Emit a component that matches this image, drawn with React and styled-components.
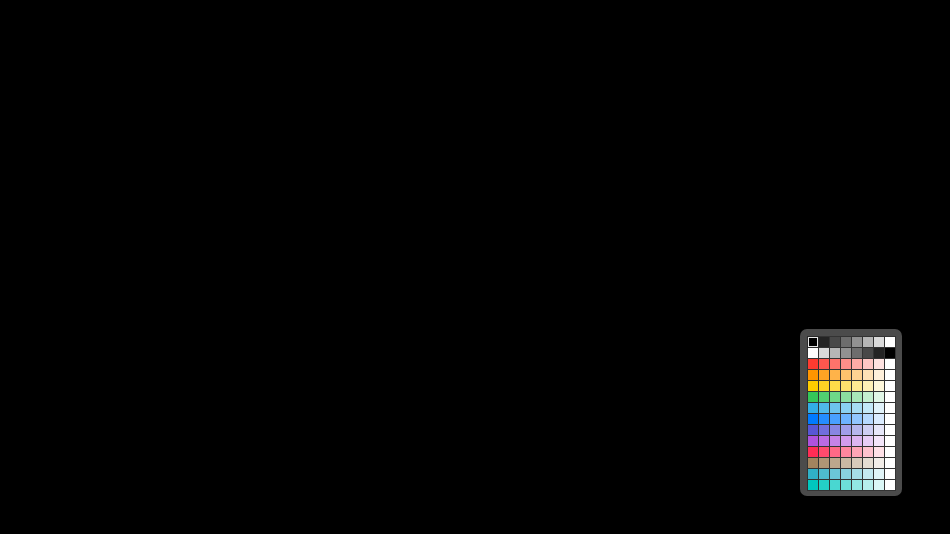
import React from "react"
import styled, {createGlobalStyle} from "styled-components"

const GlobalStyle = createGlobalStyle`
    html, body {
        margin: 0;
        padding: 0;
        background: #000;
        font-family: "Liberation Sans", Arial, sans-serif;
    }
`

const Screen = styled.div`
    width: 950px;
    height: 534px;
    box-sizing: border-box;
    display: flex;
    justify-content: flex-end;
    align-items: flex-end;
    padding: 0 48px 38px 0;
    background: #000;
`

const Palette = styled.div`
    background: #4b4b4b;
    border-radius: 7px;
    padding: 7px 6px 5px 7px;
`

const Swatches = styled.div`
    display: grid;
    grid-template-columns: repeat(8, 10px);
    grid-auto-rows: 10px;
    gap: 1px;
    padding: 1px;
    background: #333;
`

const Swatch = styled.div`
    background: ${props => props.color};
    box-shadow: ${props => props.selected ? "inset 0 0 0 1px #e8e8e8, 0 0 0 1px #2a2a2a" : "none"};
`

const bases = [
    "#ff3b30", "#ff9500", "#ffcc00", "#34c759", "#32ade6", "#007aff",
    "#5856d6", "#af52de", "#ff2d55", "#a2845e", "#30b0c7", "#00c7be",
]

const tint = (hex, t) => {
    const n = parseInt(hex.slice(1), 16)
    const mix = c => Math.round(c + (255 - c) * t)
    const r = mix((n >> 16) & 255)
    const g = mix((n >> 8) & 255)
    const b = mix(n & 255)
    return `rgb(${r}, ${g}, ${b})`
}

const grays = [0, 36, 72, 109, 145, 182, 218, 255].map(v => `rgb(${v}, ${v}, ${v})`)

const rows = [
    grays,
    [...grays].reverse(),
    ...bases.map(base => [0, 1, 2, 3, 4, 5, 6, 7].map(i => tint(base, i / 7))),
]

const App = () => {
    return (
        <Screen>
            <GlobalStyle/>
            <Palette>
                <Swatches>
                    {rows.map((row, r) => row.map((color, c) => (
                        <Swatch key={`${r}-${c}`} color={color} selected={r === 0 && c === 0}/>
                    )))}
                </Swatches>
            </Palette>
        </Screen>
    )
}

export default App
